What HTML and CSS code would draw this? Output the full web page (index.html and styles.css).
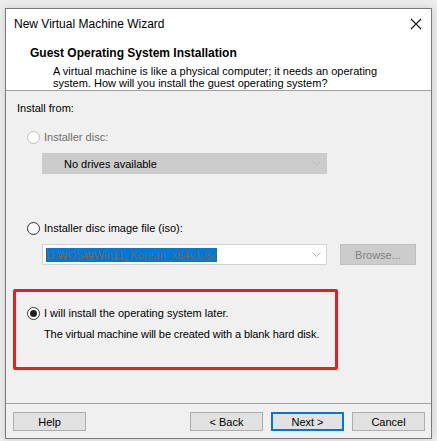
FILE: index.html
```html
<!DOCTYPE html>
<html>
<head>
<meta charset="utf-8">
<link rel="stylesheet" href="styles.css">
</head>
<body>
<div class="window">
  <div class="titlebar">
    <span class="title">New Virtual Machine Wizard</span>
    <svg class="close" width="12" height="12" viewBox="0 0 12 12"><path d="M1 1 L11 11 M11 1 L1 11" stroke="#111" stroke-width="1.1" fill="none"/></svg>
  </div>
  <div class="header">
    <div class="heading">Guest Operating System Installation</div>
    <div class="desc">A virtual machine is like a physical computer; it needs an operating<br>system. How will you install the guest operating system?</div>
  </div>
  <div class="content">
    <div class="label">Install from:</div>
    <div class="radio-row r1 disabled"><span class="radio"></span><span>Installer disc:</span></div>
    <div class="combo combo-disabled"><span class="combo-text">No drives available</span><svg class="chev" width="9" height="5" viewBox="0 0 9 5"><path d="M0.5 0.5 L4.5 4.5 L8.5 0.5" stroke="#b5b5b5" fill="none"/></svg></div>
    <div class="radio-row r2"><span class="radio"></span><span>Installer disc image file (iso):</span></div>
    <div class="iso-row">
      <div class="combo combo-iso"><span class="sel">D:₩OS₩Win11_Korean_x64v1.iso</span><span class="gap"></span><svg class="chev" width="9" height="5" viewBox="0 0 9 5"><path d="M0.5 0.5 L4.5 4.5 L8.5 0.5" stroke="#b5b5b5" fill="none"/></svg></div>
      <div class="browse">Browse...</div>
    </div>
    <div class="redbox">
      <div class="radio-row r3"><span class="radio checked"></span><span>I will install the operating system later.</span></div>
      <div class="note">The virtual machine will be created with a blank hard disk.</div>
    </div>
  </div>
  <div class="footer">
    <div class="btn">Help</div>
    <div class="spacer"></div>
    <div class="btn">&lt; Back</div>
    <div class="btn primary">Next &gt;</div>
    <div class="btn">Cancel</div>
  </div>
</div>
</body>
</html>
```

FILE: styles.css
```css
html, body {
  margin: 0;
  padding: 0;
}
body {
  background: #ececec;
  font-family: "Liberation Sans", Arial, sans-serif;
  font-size: 11px;
  color: #000;
  padding: 8px 0 0 5px;
  height: 441px;
  box-sizing: border-box;
  overflow: hidden;
}
.window {
  width: 427px;
  height: 431px;
  box-sizing: border-box;
  border: 1px solid #7a7a7a;
  background: #f0f0f0;
  display: flex;
  flex-direction: column;
  box-shadow: 0 0 8px rgba(0,0,0,0.12);
}
.titlebar {
  height: 30px;
  background: #fff;
  display: flex;
  align-items: center;
  padding-left: 8px;
  flex: none;
}
.title {
  font-size: 12px;
  color: #000;
  flex: 1;
}
.close {
  margin-right: 9px;
}
.header {
  background: #fff;
  border-bottom: 1px solid #a0a0a0;
  padding: 7px 0 0 24px;
  box-sizing: content-box;
  height: 44px;
  flex: none;
}
.heading {
  font-weight: bold;
  font-size: 12px;
  line-height: 14px;
}
.desc {
  margin-top: 5px;
  margin-left: 23px;
  line-height: 12px;
}
.content {
  flex: 1;
  display: flex;
  flex-direction: column;
  align-items: flex-start;
}
.label {
  line-height: 14px;
  margin: 10px 0 0 11px;
}
.radio-row {
  display: flex;
  align-items: center;
  height: 14px;
  line-height: 14px;
}
.radio {
  width: 11px;
  height: 11px;
  border: 1px solid #333;
  border-radius: 50%;
  background: #fff;
  margin-right: 4px;
  flex: none;
  display: flex;
  align-items: center;
  justify-content: center;
}
.radio.checked::after {
  content: "";
  width: 7px;
  height: 7px;
  border-radius: 50%;
  background: #222;
}
.r1 {
  margin: 15px 0 0 21px;
}
.disabled {
  color: #6d6d6d;
}
.disabled .radio {
  border-color: #bcbcbc;
}
.combo {
  width: 285px;
  height: 21px;
  box-sizing: border-box;
  display: flex;
  align-items: center;
  margin-left: 36px;
}
.combo-disabled {
  background: #cccccc;
  border: 1px solid #cccccc;
  margin-top: 9px;
}
.combo-text {
  margin-left: 21px;
  flex: 1;
}
.chev {
  margin-right: 5px;
}
.r2 {
  margin: 47px 0 0 21px;
}
.iso-row {
  display: flex;
  align-items: center;
  margin-top: 9px;
}
.combo-iso {
  background: #fff;
  border: 1px solid #d4d4d4;
}
.sel {
  margin-left: 3px;
  background: #0078d7;
  color: #6f6a5c;
  height: 14px;
  line-height: 14px;
  width: 171px;
  white-space: nowrap;
  overflow: hidden;
}
.gap {
  flex: 1;
}
.browse {
  width: 76px;
  height: 21px;
  box-sizing: border-box;
  background: #cccccc;
  border: 1px solid #bfbfbf;
  color: #838383;
  display: flex;
  align-items: center;
  justify-content: center;
  margin-left: 13px;
}
.redbox {
  margin: 24px 0 0 7px;
  width: 325px;
  height: 81px;
  box-sizing: border-box;
  border: 3px solid #ed1c24;
  border-radius: 2px;
  padding: 14px 0 0 11px;
}
.note {
  margin: 7px 0 0 17px;
  line-height: 14px;
  letter-spacing: -0.1px;
}
.footer {
  flex: none;
  height: 35px;
  box-sizing: border-box;
  border-top: 1px solid #a0a0a0;
  display: flex;
  align-items: flex-start;
  padding: 8px 6px 0 7px;
  gap: 8px;
}
.spacer {
  flex: 1;
}
.btn {
  width: 73px;
  height: 19px;
  box-sizing: border-box;
  background: #e1e1e1;
  border: 1px solid #adadad;
  display: flex;
  align-items: center;
  justify-content: center;
}
.btn.primary {
  border: 2px solid #0078d7;
}
```
